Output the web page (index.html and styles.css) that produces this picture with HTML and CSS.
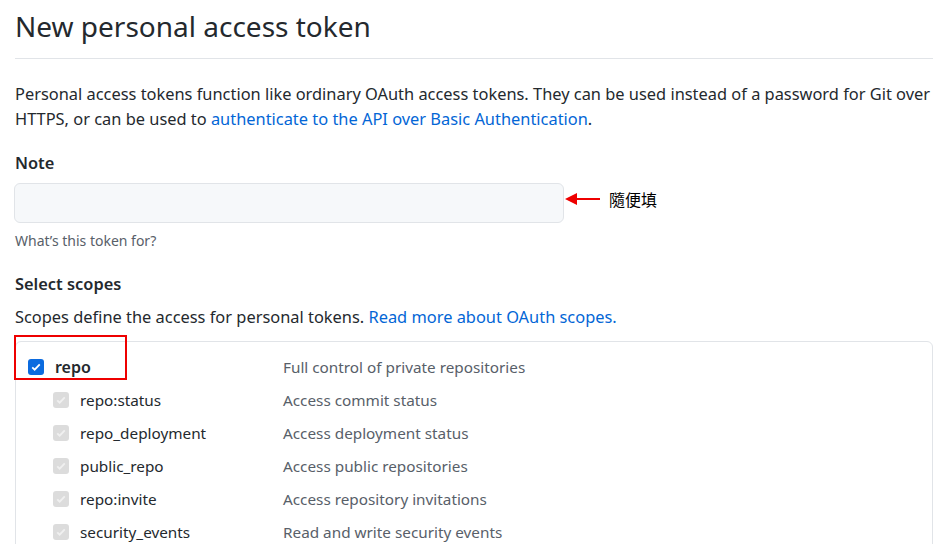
FILE: index.html
```html
<!DOCTYPE html>
<html lang="en">
<head>
<meta charset="utf-8">
<link rel="stylesheet" href="styles.css">
</head>
<body>
<div class="page">
  <h1 class="title">New personal access token</h1>
  <p class="intro">Personal access tokens function like ordinary OAuth access tokens. They can be used instead of a password for Git over HTTPS, or can be used to <a class="link" href="#">authenticate to the API over Basic Authentication</a>.</p>

  <div class="field">
    <div class="label">Note</div>
    <div class="note-row">
      <div class="input"></div>
      <div class="annot">
        <svg class="arrow" width="36" height="14" viewBox="0 0 36 14"><line x1="10" y1="7" x2="35" y2="7" stroke="#e00" stroke-width="2"/><polygon points="0,7 12,1 12,13" fill="#e00"/></svg>
        <span class="annot-text">隨便填</span>
      </div>
    </div>
    <div class="hint">What’s this token for?</div>
  </div>

  <div class="label scopes-label">Select scopes</div>
  <p class="scopes-desc">Scopes define the access for personal tokens. <a class="link" href="#">Read more about OAuth scopes.</a></p>

  <div class="scope-box">
    <div class="row main">
      <div class="name"><span class="cb on"><svg viewBox="0 0 16 16" width="12" height="12"><path d="M3 8.5l3.2 3L13 4.5" fill="none" stroke="#fff" stroke-width="2.4"/></svg></span><span class="strong">repo</span></div>
      <div class="desc">Full control of private repositories</div>
      <div class="highlight"></div>
    </div>
    <div class="row sub">
      <div class="name"><span class="cb off"><svg viewBox="0 0 16 16" width="12" height="12"><path d="M3 8.5l3.2 3L13 4.5" fill="none" stroke="#f0f0f0" stroke-width="2.4"/></svg></span>repo:status</div>
      <div class="desc">Access commit status</div>
    </div>
    <div class="row sub">
      <div class="name"><span class="cb off"><svg viewBox="0 0 16 16" width="12" height="12"><path d="M3 8.5l3.2 3L13 4.5" fill="none" stroke="#f0f0f0" stroke-width="2.4"/></svg></span>repo_deployment</div>
      <div class="desc">Access deployment status</div>
    </div>
    <div class="row sub">
      <div class="name"><span class="cb off"><svg viewBox="0 0 16 16" width="12" height="12"><path d="M3 8.5l3.2 3L13 4.5" fill="none" stroke="#f0f0f0" stroke-width="2.4"/></svg></span>public_repo</div>
      <div class="desc">Access public repositories</div>
    </div>
    <div class="row sub">
      <div class="name"><span class="cb off"><svg viewBox="0 0 16 16" width="12" height="12"><path d="M3 8.5l3.2 3L13 4.5" fill="none" stroke="#f0f0f0" stroke-width="2.4"/></svg></span>repo:invite</div>
      <div class="desc">Access repository invitations</div>
    </div>
    <div class="row sub">
      <div class="name"><span class="cb off"><svg viewBox="0 0 16 16" width="12" height="12"><path d="M3 8.5l3.2 3L13 4.5" fill="none" stroke="#f0f0f0" stroke-width="2.4"/></svg></span>security_events</div>
      <div class="desc">Read and write security events</div>
    </div>
  </div>
</div>
</body>
</html>
```

FILE: styles.css
```css
* { box-sizing: border-box; }
html, body { margin: 0; padding: 0; background: #fff; overflow: hidden; }
body {
  font-family: "Noto Sans", "Open Sans", sans-serif;
  color: #24292e;
  font-size: 16.4px;
}
.page {
  width: 949px;
  height: 544px;
  padding: 0 16px 0 15px;
}
.title {
  margin: 0;
  font-size: 28px;
  font-weight: 400;
  line-height: 40px;
  padding-top: 6px;
  padding-bottom: 12px;
  border-bottom: 1px solid #e1e4e8;
}
.intro {
  margin: 22px 0 0;
  line-height: 25px;
}
.link { color: #0366d6; text-decoration: none; }
.field { margin-top: 20px; }
.label {
  font-weight: 600;
  line-height: 24px;
}
.note-row {
  display: flex;
  align-items: center;
  margin-top: 8px;
}
.input {
  width: 550px;
  height: 40px;
  margin-left: -1px;
  background: #f6f8fa;
  border: 1px solid #e1e4e8;
  border-radius: 6px;
}
.annot {
  display: flex;
  align-items: center;
  margin-left: 1px;
  margin-bottom: 9px;
}
.arrow { display: block; }
.annot-text {
  margin-left: 8px;
  font-family: "Noto Sans CJK TC", sans-serif;
  font-size: 16px;
  color: #000;
}
.hint {
  margin-top: 8px;
  font-size: 14px;
  color: #586069;
  line-height: 20px;
}
.scopes-label { margin-top: 21px; }
.scopes-desc {
  margin: 8px 0 0;
  line-height: 25px;
}
.scope-box {
  margin-top: 12px;
  border: 1px solid #e1e4e8;
  border-radius: 6px;
  padding-top: 8px;
  height: 220px;
  font-size: 15.3px;
}
.row {
  display: flex;
  align-items: center;
  height: 33px;
  position: relative;
}
.name {
  display: flex;
  align-items: center;
  width: 267px;
}
.row.main .name { padding-left: 12px; }
.row.main .strong { font-size: 16px; }
.row.sub .name { padding-left: 37px; }
.strong { font-weight: 600; }
.cb {
  width: 16px;
  height: 16px;
  border-radius: 3px;
  display: flex;
  align-items: center;
  justify-content: center;
  margin-right: 11px;
  flex: none;
}
.cb.on { background: #0b6bdf; }
.cb.off { background: #dcdcdc; }
.desc { color: #586069; }
.highlight {
  position: absolute;
  left: -2px;
  top: -15px;
  width: 113px;
  height: 45px;
  border: 2px solid #e00;
}
```
